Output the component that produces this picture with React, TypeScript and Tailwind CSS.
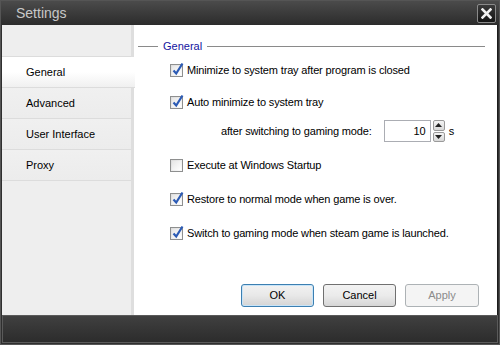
import React from 'react';

const font = { fontFamily: '"Liberation Sans", Arial, sans-serif' };

function Check({ on }: { on: boolean }) {
  return (
    <span className="relative inline-block w-[13px] h-[13px] shrink-0 border border-[#8e8f8f] bg-gradient-to-br from-[#dcdcdc] to-[#fbfbfb]">
      <span className="absolute inset-[1px] bg-gradient-to-br from-[#e6e6e6] to-[#ffffff]" />
      {on && (
        <svg className="absolute left-[1px] top-[-3px]" width="12" height="14" viewBox="0 0 12 14">
          <path d="M1.5 8.5 L4.2 11.5 L10.5 1.5" fill="none" stroke="#2c5bb5" strokeWidth="2.2" strokeLinejoin="miter" />
        </svg>
      )}
    </span>
  );
}

function Row({ on, label }: { on: boolean; label: string }) {
  return (
    <div className="flex items-center gap-[4px] h-[14px] pl-[170px]">
      <Check on={on} />
      <span className="text-[11px] text-black leading-none tracking-[-0.15px]">{label}</span>
    </div>
  );
}

const tabs = ['General', 'Advanced', 'User Interface', 'Proxy'];

export default function App() {
  return (
    <div className="w-[500px] h-[345px] flex flex-col bg-[#2f2f2f] border border-[#555] overflow-hidden" style={font}>
      {/* title bar */}
      <div className="h-[24px] shrink-0 flex items-center justify-between pl-[15px] pr-[3px] bg-gradient-to-b from-[#4b4b4b] to-[#2c2c2c]">
        <span className="text-[14px] text-[#c8c8c8] leading-none">Settings</span>
        <div className="w-[19px] h-[19px] mt-[1px] rounded-[2px] border border-[#8a8a8a] bg-gradient-to-b from-[#3a3a3a] to-[#151515] flex items-center justify-center">
          <svg width="11" height="11" viewBox="0 0 11 11">
            <path d="M1.5 1.5 L9.5 9.5 M9.5 1.5 L1.5 9.5" stroke="#f2f2f2" strokeWidth="2.6" strokeLinecap="square" />
          </svg>
        </div>
      </div>

      {/* body */}
      <div className="h-[290px] shrink-0 flex mx-[1px] border-r border-[#1c1c1c]">
        {/* sidebar */}
        <div className="w-[132px] shrink-0 flex bg-[#eeeeee]">
          <div className="w-[129px] flex flex-col">
            <div className="h-[32px] border-b border-[#dcdcdc]" />
            {tabs.map((t, i) => (
              <div
                key={t}
                className={
                  'h-[31px] flex items-center pl-[24px] text-[11px] text-black border-b border-[#dcdcdc] ' +
                  (i === 0 ? 'w-[133px] bg-gradient-to-b from-[#ffffff] via-[#ffffff] to-[#f0f0f0] relative z-10' : 'bg-gradient-to-b from-[#f0f0f0] to-[#ececec]')
                }
              >
                {t}
              </div>
            ))}
          </div>
          <div className="w-[3px] bg-[#dedede]" />
        </div>

        {/* content */}
        <div className="flex-1 bg-white flex flex-col">
          <div className="flex items-center h-[14px] mt-[14px] pl-[4px] pr-[12px]">
            <div className="w-[20px] h-px bg-[#8a8a8a]" />
            <span className="px-[5px] text-[11px] text-[#1414a0] leading-none">General</span>
            <div className="flex-1 h-px bg-[#8a8a8a]" />
          </div>

          <div className="flex flex-col -ml-[134px]">
            <div className="mt-[10px]"><Row on label="Minimize to system tray after program is closed" /></div>
            <div className="mt-[18px]"><Row on label="Auto minimize to system tray" /></div>
            <div className="mt-[11px] flex items-center pl-[221px] h-[22px]">
              <span className="text-[11px] text-black tracking-[-0.15px]">after switching to gaming mode:</span>
              <div className="ml-[12px] w-[47px] h-[22px] border border-[#abadb3] flex items-center justify-end pr-[4px] text-[11px]">10</div>
              <div className="ml-[2px] w-[12px] h-[22px] flex flex-col gap-[1px]">
                <div className="flex-1 border border-[#9a9a9a] rounded-[2px] bg-gradient-to-b from-[#f4f4f4] to-[#d8d8d8] flex items-center justify-center">
                  <svg width="7" height="4" viewBox="0 0 7 4"><path d="M0 4 L3.5 0 L7 4 Z" fill="#222" /></svg>
                </div>
                <div className="flex-1 border border-[#9a9a9a] rounded-[2px] bg-gradient-to-b from-[#f4f4f4] to-[#d8d8d8] flex items-center justify-center">
                  <svg width="7" height="4" viewBox="0 0 7 4"><path d="M0 0 L3.5 4 L7 0 Z" fill="#222" /></svg>
                </div>
              </div>
              <span className="ml-[4px] text-[11px] text-black">s</span>
            </div>
            <div className="mt-[16px]"><Row on={false} label="Execute at Windows Startup" /></div>
            <div className="mt-[20px]"><Row on label="Restore to normal mode when game is over." /></div>
            <div className="mt-[20px]"><Row on label="Switch to gaming mode when steam game is launched." /></div>
          </div>

          <div className="flex-1" />
          <div className="flex gap-[9px] pl-[107px] mb-[8px]">
            <button className="w-[73px] h-[23px] rounded-[3px] border border-[#3c7fb1] bg-gradient-to-b from-[#f2f2f2] via-[#e8e8e8] to-[#d4d4d4] text-[11px] text-black shadow-[inset_0_0_0_1px_#c8e4f8]">OK</button>
            <button className="w-[73px] h-[23px] rounded-[3px] border border-[#707070] bg-gradient-to-b from-[#f2f2f2] via-[#ebebeb] to-[#d6d6d6] text-[11px] text-black">Cancel</button>
            <button className="w-[74px] h-[23px] rounded-[3px] border border-[#adb2b5] bg-[#f4f4f4] text-[11px] text-[#8b8b8b]">Apply</button>
          </div>
        </div>
      </div>

      {/* bottom bar */}
      <div className="flex-1 mx-[1px] mb-[1px] border border-[#5a5a5a] bg-gradient-to-b from-[#404040] to-[#2c2c2c]" />
    </div>
  );
}
